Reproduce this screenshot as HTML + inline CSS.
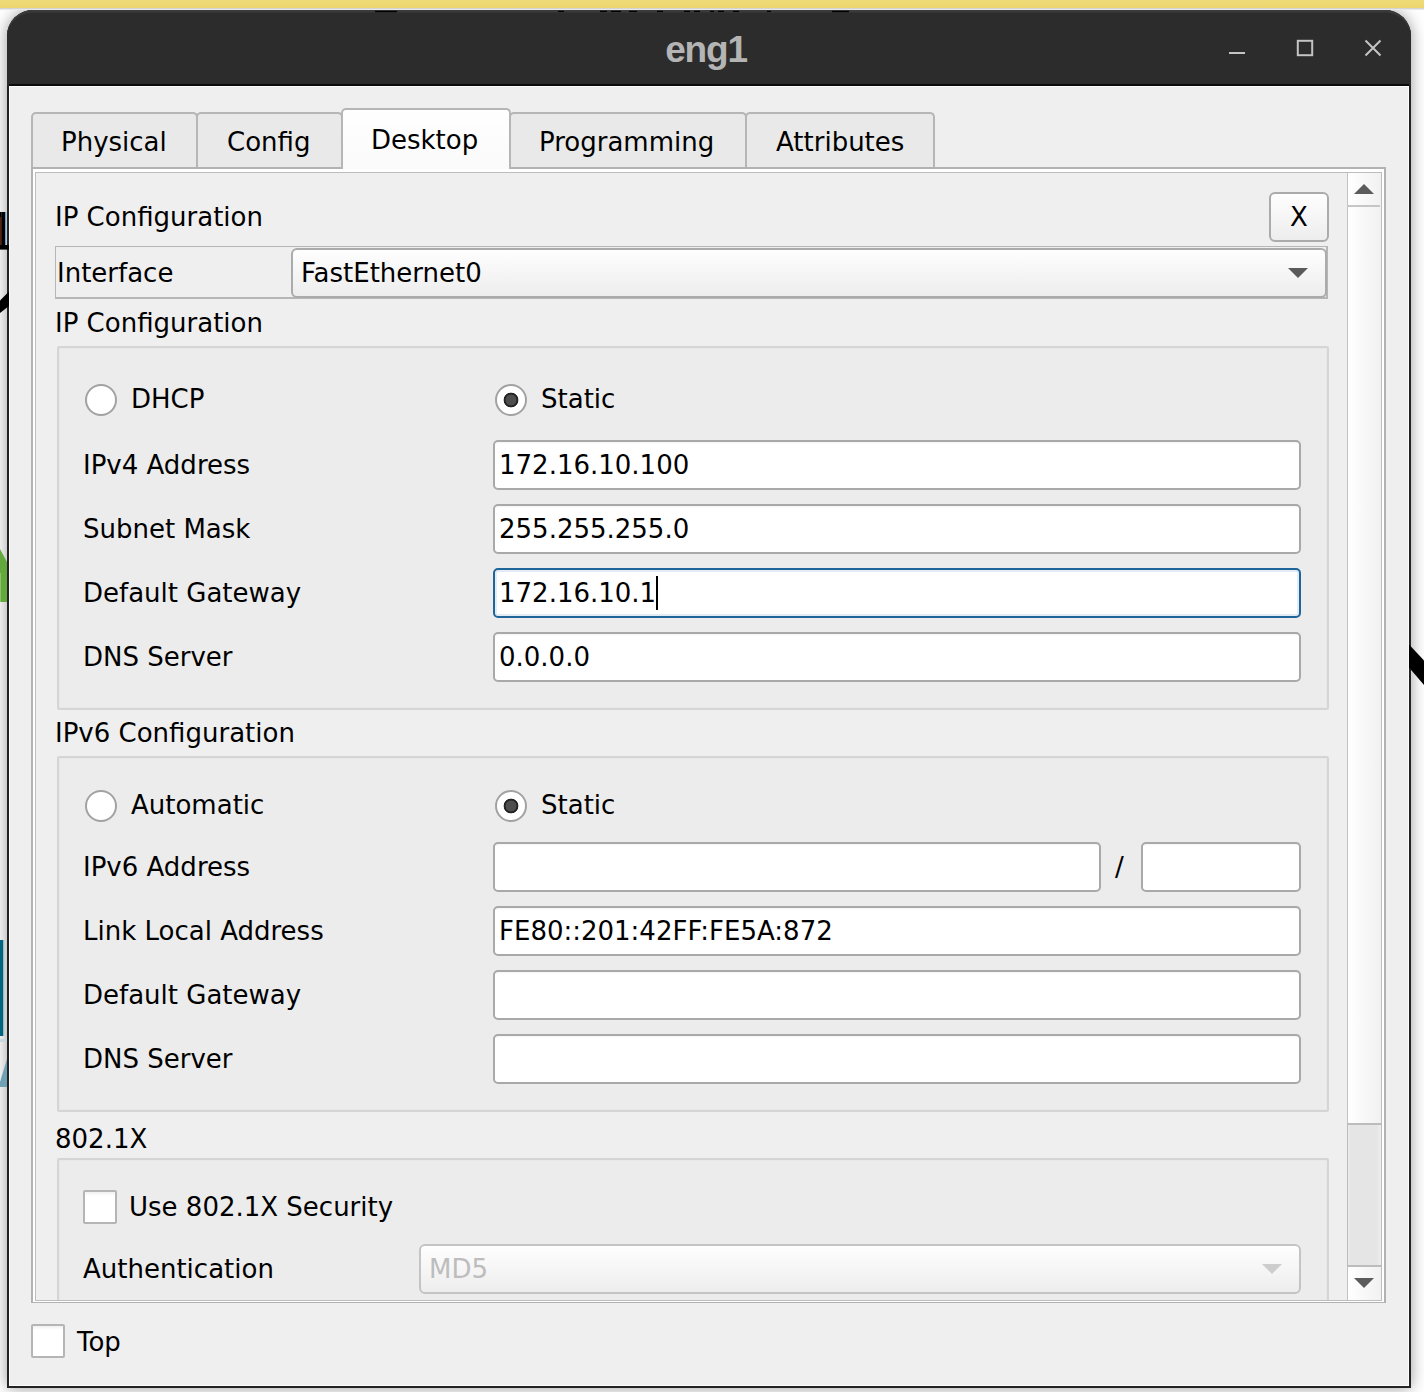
<!DOCTYPE html>
<html lang="en">
<head>
<meta charset="utf-8">
<title>eng1</title>
<style>
html,body{margin:0;padding:0;}
body{width:1424px;height:1392px;position:relative;overflow:hidden;background:#fff;
 font-family:"DejaVu Sans","Liberation Sans",sans-serif;font-size:26px;color:#000;}
*{box-sizing:border-box;}
.abs,.t,.inp,.grp,.tab,.radio,.chk{position:absolute;}
.t{line-height:30px;height:30px;white-space:nowrap;}
#yellow{left:0;top:0;width:1424px;height:8px;background:linear-gradient(#f0db79,#ecd56e);}
#yline{left:0;top:8px;width:1424px;height:2px;background:linear-gradient(#c9c9c9,#f2f2f2);}
#tbar{left:7px;top:10px;width:1404px;height:76px;background:#2c2c2c;border-radius:26px 26px 0 0;box-shadow:inset 0 3px 1px -0.5px #3b3b3b;}
#win{left:7px;top:10px;width:1404px;height:1378px;background:#232323;border-radius:26px 26px 0 0;
 box-shadow:0 0 16px 0 rgba(0,0,0,.4);}
#client{left:9px;top:86px;width:1400px;height:1300px;background:#efefef;border:1px solid #fcfcfc;}
#tline{left:9px;top:84px;width:1400px;height:2px;background:#0c0c0c;}
#title{left:-3px;top:10px;width:1418px;height:75px;line-height:80px;text-align:center;
 font-family:"Liberation Sans",sans-serif;font-weight:bold;font-size:37px;letter-spacing:-1.2px;color:#b4b4b4;}
.tab{top:112px;height:55px;background:#e9e9e9;border:2px solid #b6b6b6;border-bottom:none;border-radius:5px 5px 0 0;}
.tab.sel{top:108px;height:61px;background:linear-gradient(#ffffff,#fafafa);z-index:3;}
#paneo{left:31px;top:167px;width:1355px;height:1136px;border:solid #b2b2b2;border-width:2px 2px 1px 2px;background:#fff;}
#panei{left:35px;top:172px;width:1347px;height:1129px;border:1px solid #bdbdbd;background:#efefef;overflow:hidden;}
.grp{left:57px;width:1272px;background:#ececec;border:2px solid #d5d5d5;border-radius:2px;box-shadow:inset 0 0 0 1px #e8e8e8;}
.inp{height:50px;background:linear-gradient(#f4f4f4,#fff 2px);border:2px solid #a9a9a9;border-radius:5px;}
.inp.foc{border-color:#1f6599;box-shadow:inset 0 0 0 2px #e3ecf4;}
.radio{width:32px;height:32px;border-radius:50%;background:#fff;border:2px solid #a2a2a2;}
.radio.on{background:radial-gradient(circle at 50% 50%,#4e4e4e 0,#4e4e4e 5.1px,#242424 5.8px,#222 7px,#fff 7.7px);}
.chk{width:34px;height:34px;background:linear-gradient(#f1f1f1,#fff 4px);border:2px solid #b5b5b5;border-radius:2px;}
.btn{background:linear-gradient(#fefefe,#ededed);border:2px solid #ababab;border-radius:6px;}
</style>
</head>
<body>
<div id="win" class="abs"></div>
<div id="tbar" class="abs"></div>
<div id="yellow" class="abs"></div>
<div id="yline" class="abs"></div>
<div id="title" class="abs">eng1</div>
<div id="tline" class="abs"></div>
<div id="client" class="abs"></div>

<!-- tabs -->
<div id="paneo" class="abs"></div>
<div class="tab" style="left:31px;width:167px;"></div>
<div class="tab" style="left:196px;width:147px;"></div>
<div class="tab" style="left:509px;width:238px;"></div>
<div class="tab" style="left:745px;width:190px;"></div>
<div class="tab sel" style="left:341px;width:170px;"></div>
<div id="panei" class="abs"></div>

<div class="t" style="left:61px;top:127px;z-index:4">Physical</div>
<div class="t" style="left:227px;top:127px;z-index:4">Config</div>
<div class="t" style="left:371px;top:125px;z-index:4">Desktop</div>
<div class="t" style="left:539px;top:127px;z-index:4">Programming</div>
<div class="t" style="left:776px;top:127px;z-index:4">Attributes</div>

<!-- scroll content -->
<div class="t" style="left:55px;top:202px">IP Configuration</div>
<div class="abs btn" style="left:1269px;top:192px;width:60px;height:50px;"></div>
<div class="t" style="left:1269px;top:202px;width:60px;text-align:center">X</div>

<div class="abs" style="left:55px;top:246px;width:1273px;height:53px;border:solid #b6b6b6;border-width:1px 2px 2px 1px;"></div>
<div class="t" style="left:57px;top:258px">Interface</div>
<div class="abs btn" style="left:291px;top:248px;width:1036px;height:50px;"></div>
<div class="t" style="left:301px;top:258px">FastEthernet0</div>
<svg class="abs" style="left:1287px;top:267px" width="22" height="12" viewBox="0 0 22 12"><path d="M1 1h20L11 11z" fill="#5a5a5a"/></svg>

<div class="t" style="left:55px;top:308px">IP Configuration</div>
<div class="grp" style="top:346px;height:364px;"></div>
<div class="radio" style="left:85px;top:384px"></div>
<div class="t" style="left:131px;top:384px">DHCP</div>
<div class="radio on" style="left:495px;top:384px"></div>
<div class="t" style="left:541px;top:384px">Static</div>

<div class="t" style="left:83px;top:450px">IPv4 Address</div>
<div class="inp" style="left:493px;top:440px;width:808px;"></div>
<div class="t" style="left:499px;top:450px">172.16.10.100</div>
<div class="t" style="left:83px;top:514px">Subnet Mask</div>
<div class="inp" style="left:493px;top:504px;width:808px;"></div>
<div class="t" style="left:499px;top:514px">255.255.255.0</div>
<div class="t" style="left:83px;top:578px">Default Gateway</div>
<div class="inp foc" style="left:493px;top:568px;width:808px;"></div>
<div class="t" style="left:499px;top:578px">172.16.10.1</div>
<div class="abs" style="left:656px;top:576px;width:2px;height:34px;background:#000"></div>
<div class="t" style="left:83px;top:642px">DNS Server</div>
<div class="inp" style="left:493px;top:632px;width:808px;"></div>
<div class="t" style="left:499px;top:642px">0.0.0.0</div>

<div class="t" style="left:55px;top:718px">IPv6 Configuration</div>
<div class="grp" style="top:756px;height:356px;"></div>
<div class="radio" style="left:85px;top:790px"></div>
<div class="t" style="left:131px;top:790px">Automatic</div>
<div class="radio on" style="left:495px;top:790px"></div>
<div class="t" style="left:541px;top:790px">Static</div>

<div class="t" style="left:83px;top:852px">IPv6 Address</div>
<div class="inp" style="left:493px;top:842px;width:608px;"></div>
<div class="t" style="left:1115px;top:852px">/</div>
<div class="inp" style="left:1141px;top:842px;width:160px;"></div>
<div class="t" style="left:83px;top:916px">Link Local Address</div>
<div class="inp" style="left:493px;top:906px;width:808px;"></div>
<div class="t" style="left:499px;top:916px">FE80::201:42FF:FE5A:872</div>
<div class="t" style="left:83px;top:980px">Default Gateway</div>
<div class="inp" style="left:493px;top:970px;width:808px;"></div>
<div class="t" style="left:83px;top:1044px">DNS Server</div>
<div class="inp" style="left:493px;top:1034px;width:808px;"></div>

<div class="t" style="left:55px;top:1124px">802.1X</div>
<div class="grp" style="top:1158px;height:160px;clip-path:inset(0 0 18px 0)"></div>
<div class="chk" style="left:83px;top:1190px"></div>
<div class="t" style="left:129px;top:1192px">Use 802.1X Security</div>
<div class="t" style="left:83px;top:1254px">Authentication</div>
<div class="abs btn" style="left:419px;top:1244px;width:882px;height:50px;border-color:#c4c4c4"></div>
<div class="t" style="left:429px;top:1254px;color:#bdbdbd">MD5</div>
<svg class="abs" style="left:1261px;top:1263px" width="22" height="12" viewBox="0 0 22 12"><path d="M1 1h20L11 11z" fill="#cdcdcd"/></svg>

<!-- scrollbar -->
<div class="abs" style="left:1347px;top:173px;width:34px;height:1127px;background:linear-gradient(90deg,#ffffff,#f1f1f1);border-left:1px solid #c2c2c2;"></div>
<div class="abs" style="left:1347px;top:205px;width:33px;height:2px;background:#c6c6c6"></div>
<svg class="abs" style="left:1353px;top:183px" width="22" height="12" viewBox="0 0 22 12"><path d="M1 11h20L11 1z" fill="#5b5b5b"/></svg>
<div class="abs" style="left:1347px;top:1123px;width:34px;height:144px;background:#e5e5e5;border:solid #bcbcbc;border-width:2px 0 2px 1px;box-shadow:inset 1.5px 0 0 #ebebeb,inset -3px 0 0 #ebebeb;"></div>
<svg class="abs" style="left:1353px;top:1277px" width="22" height="12" viewBox="0 0 22 12"><path d="M1 1h20L11 11z" fill="#5b5b5b"/></svg>

<!-- bottom -->
<div class="chk" style="left:31px;top:1324px"></div>
<div class="t" style="left:77px;top:1327px">Top</div>

<!-- background bits peeking around the window -->
<svg class="abs" style="left:0;top:0;z-index:6" width="10" height="1392" viewBox="0 0 10 1392">
<rect x="0" y="217" width="1.2" height="29" fill="#6b1a00"/><rect x="0" y="212" width="1.2" height="5" fill="#000"/><rect x="1.2" y="212" width="4" height="34" fill="#000"/><rect x="5.2" y="212" width="1" height="34" fill="#5b9bd5"/>
<rect x="0" y="245" width="9" height="4.6" fill="#000"/>
<polygon points="0,300.5 9,291.5 9,306 0,313" fill="#000"/>
<polygon points="0,549 7,562 7,602 0,602" fill="#63a83c"/><rect x="0" y="573" width="1" height="29" fill="#8cc06c"/>
<rect x="0" y="940" width="3" height="96" fill="#00657f"/><rect x="3" y="940" width="1.3" height="96" fill="#9bbcc8"/>
<rect x="0" y="1039" width="7" height="3" fill="#c9d8de"/>
<polygon points="7,1059 7,1087 0,1087 0,1082" fill="#6fa2b5"/>
</svg>
<svg class="abs" style="left:1409px;top:640px;z-index:6" width="15" height="50" viewBox="0 0 15 50">
<polygon points="0,4.5 15,20.5 15,45 0,27.5" fill="#000"/>
</svg>
<svg class="abs" style="left:0;top:9.6px;z-index:6" width="1424" height="3" viewBox="0 0 1424 3">
<g fill="#000"><rect x="375" y="0.8" width="22" height="1.4"/><rect x="558" y="0.8" width="6" height="1.2"/><rect x="600" y="0.8" width="7" height="1.2"/><rect x="611" y="0.8" width="10" height="1.2"/><rect x="629" y="0.8" width="8" height="1.2"/><rect x="657" y="0.8" width="6" height="1.2"/><rect x="684" y="0.8" width="6" height="1.2"/><rect x="694" y="0.8" width="6" height="1.2"/><rect x="710" y="0.8" width="4" height="1.2"/><rect x="718" y="0.8" width="6" height="1.2"/><rect x="733" y="0.8" width="6" height="1.2"/><rect x="767" y="0.8" width="4" height="1.2"/><rect x="832" y="0.8" width="17" height="1.4"/></g>
</svg>
<!-- title buttons -->
<svg class="abs" style="left:1225px;top:36px" width="160" height="24" viewBox="0 0 160 24">
<g stroke="#c4c4c4" stroke-width="2" fill="none">
<path d="M4 17h16"/>
<rect x="72.8" y="4.8" width="14.4" height="14.4"/>
<path d="M140.5 4.5l15 15M155.5 4.5l-15 15"/>
</g></svg>
</body>
</html>
